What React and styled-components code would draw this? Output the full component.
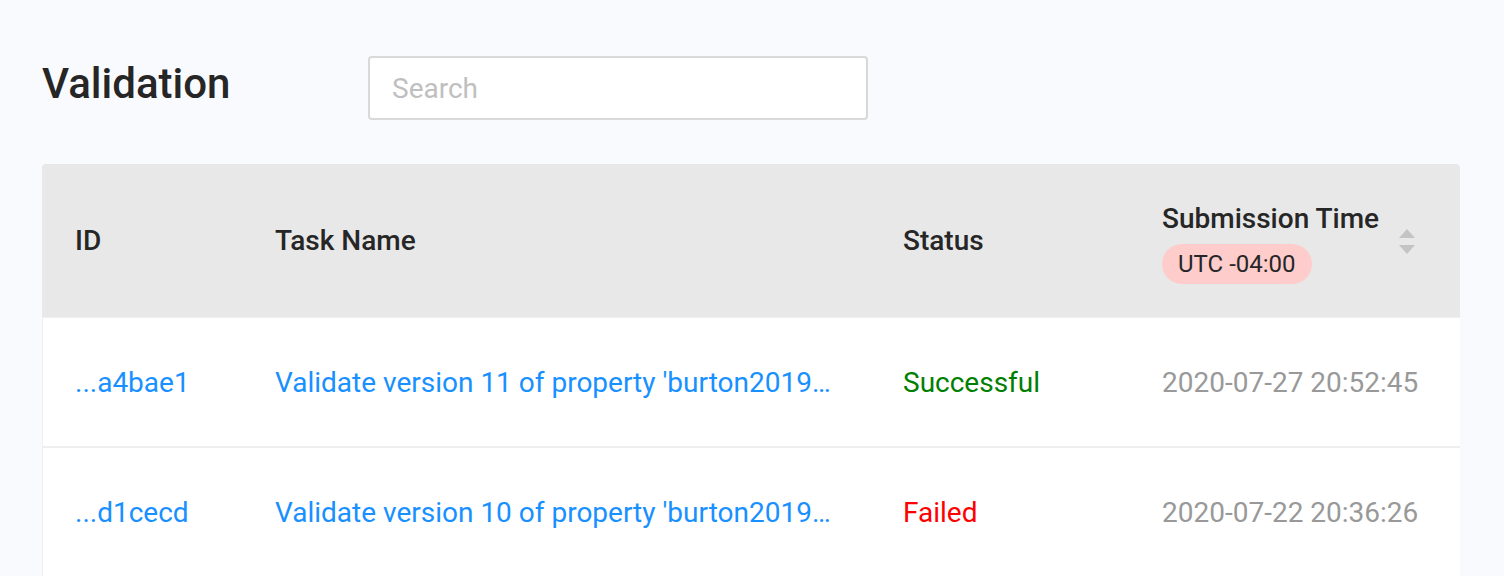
import React from 'react'
import styled, { createGlobalStyle } from 'styled-components'

const GlobalStyle = createGlobalStyle`
  body {
    margin: 0;
    background: #f9fafd;
    font-family: Roboto, "Liberation Sans", Arial, sans-serif;
  }
`

const Page = styled.div`
  padding: 56px 44px 0 42px;
`

const TopBar = styled.div`
  display: flex;
  align-items: center;
  height: 64px;
`

const Title = styled.h1`
  width: 326px;
  margin: 0;
  font-size: 42px;
  font-weight: 500;
  color: #262626;
  line-height: 1;
  position: relative;
  top: -4px;
`

const Search = styled.input`
  box-sizing: border-box;
  width: 500px;
  height: 64px;
  padding: 0 22px;
  border: 2px solid #d9d9d9;
  border-radius: 4px;
  background: #fff;
  font-family: inherit;
  font-size: 28px;
  color: #262626;
  outline: none;
  &::placeholder {
    color: #bfbfbf;
  }
`

const Table = styled.div`
  margin-top: 44px;
  width: 1418px;
  border-radius: 4px 4px 0 0;
  overflow: hidden;
  background: #fff;
  box-shadow: inset 1px 0 0 #f0f0f0;
`

const cols = '200px 628px 259px 331px'

const HeadRow = styled.div`
  display: grid;
  grid-template-columns: ${cols};
  height: 153px;
  background: #e8e8e8;
  border-bottom: 1px solid #f0f0f0;
`

const HeadCell = styled.div`
  display: flex;
  align-items: center;
  padding: 0 33px;
  font-size: 28px;
  font-weight: 500;
  color: #262626;
`

const Row = styled.div`
  display: grid;
  grid-template-columns: ${cols};
  height: 128px;
  border-bottom: 2px solid #eeeeee;
`

const Cell = styled.div`
  display: flex;
  align-items: center;
  padding: 0 33px;
  font-size: 28px;
  min-width: 0;
  color: ${p => p.$color || '#262626'};
`

const Ellipsis = styled.span`
  overflow: hidden;
  white-space: nowrap;
  text-overflow: ellipsis;
`

const TimeHead = styled.div`
  display: flex;
  flex-direction: column;
  align-items: flex-start;
  gap: 9px;
  flex: 1;
  margin-top: 5px;
`

const Badge = styled.span`
  display: inline-block;
  padding: 0 16px;
  height: 40px;
  line-height: 40px;
  border-radius: 20px;
  background: #ffcccc;
  font-size: 24px;
  font-weight: 400;
  color: #262626;
`

const Sorter = styled.svg`
  flex: none;
  margin-right: 12px;
  margin-top: 2px;
`

const statusColor = { Successful: '#008000', Failed: '#ff0000' }

const rows = [
  { id: '...a4bae1', name: "Validate version 11 of property 'burton2019…", status: 'Successful', time: '2020-07-27 20:52:45' },
  { id: '...d1cecd', name: "Validate version 10 of property 'burton2019…", status: 'Failed', time: '2020-07-22 20:36:26' },
]

export default function App() {
  return (
    <Page>
      <GlobalStyle />
      <TopBar>
        <Title>Validation</Title>
        <Search placeholder="Search" />
      </TopBar>
      <Table>
        <HeadRow>
          <HeadCell>ID</HeadCell>
          <HeadCell>Task Name</HeadCell>
          <HeadCell>Status</HeadCell>
          <HeadCell>
            <TimeHead>
              <span>Submission Time</span>
              <Badge>UTC -04:00</Badge>
            </TimeHead>
            <Sorter width="16" height="26" viewBox="0 0 16 26">
              <path d="M8 0 L16 9 L0 9 Z" fill="#c4c4c4" />
              <path d="M0 16 L16 16 L8 25 Z" fill="#c4c4c4" />
            </Sorter>
          </HeadCell>
        </HeadRow>
        {rows.map(r => (
          <Row key={r.id}>
            <Cell $color="#1890ff">{r.id}</Cell>
            <Cell $color="#1890ff"><Ellipsis>{r.name}</Ellipsis></Cell>
            <Cell $color={statusColor[r.status]}>{r.status}</Cell>
            <Cell $color="#999999">{r.time}</Cell>
          </Row>
        ))}
      </Table>
    </Page>
  )
}
